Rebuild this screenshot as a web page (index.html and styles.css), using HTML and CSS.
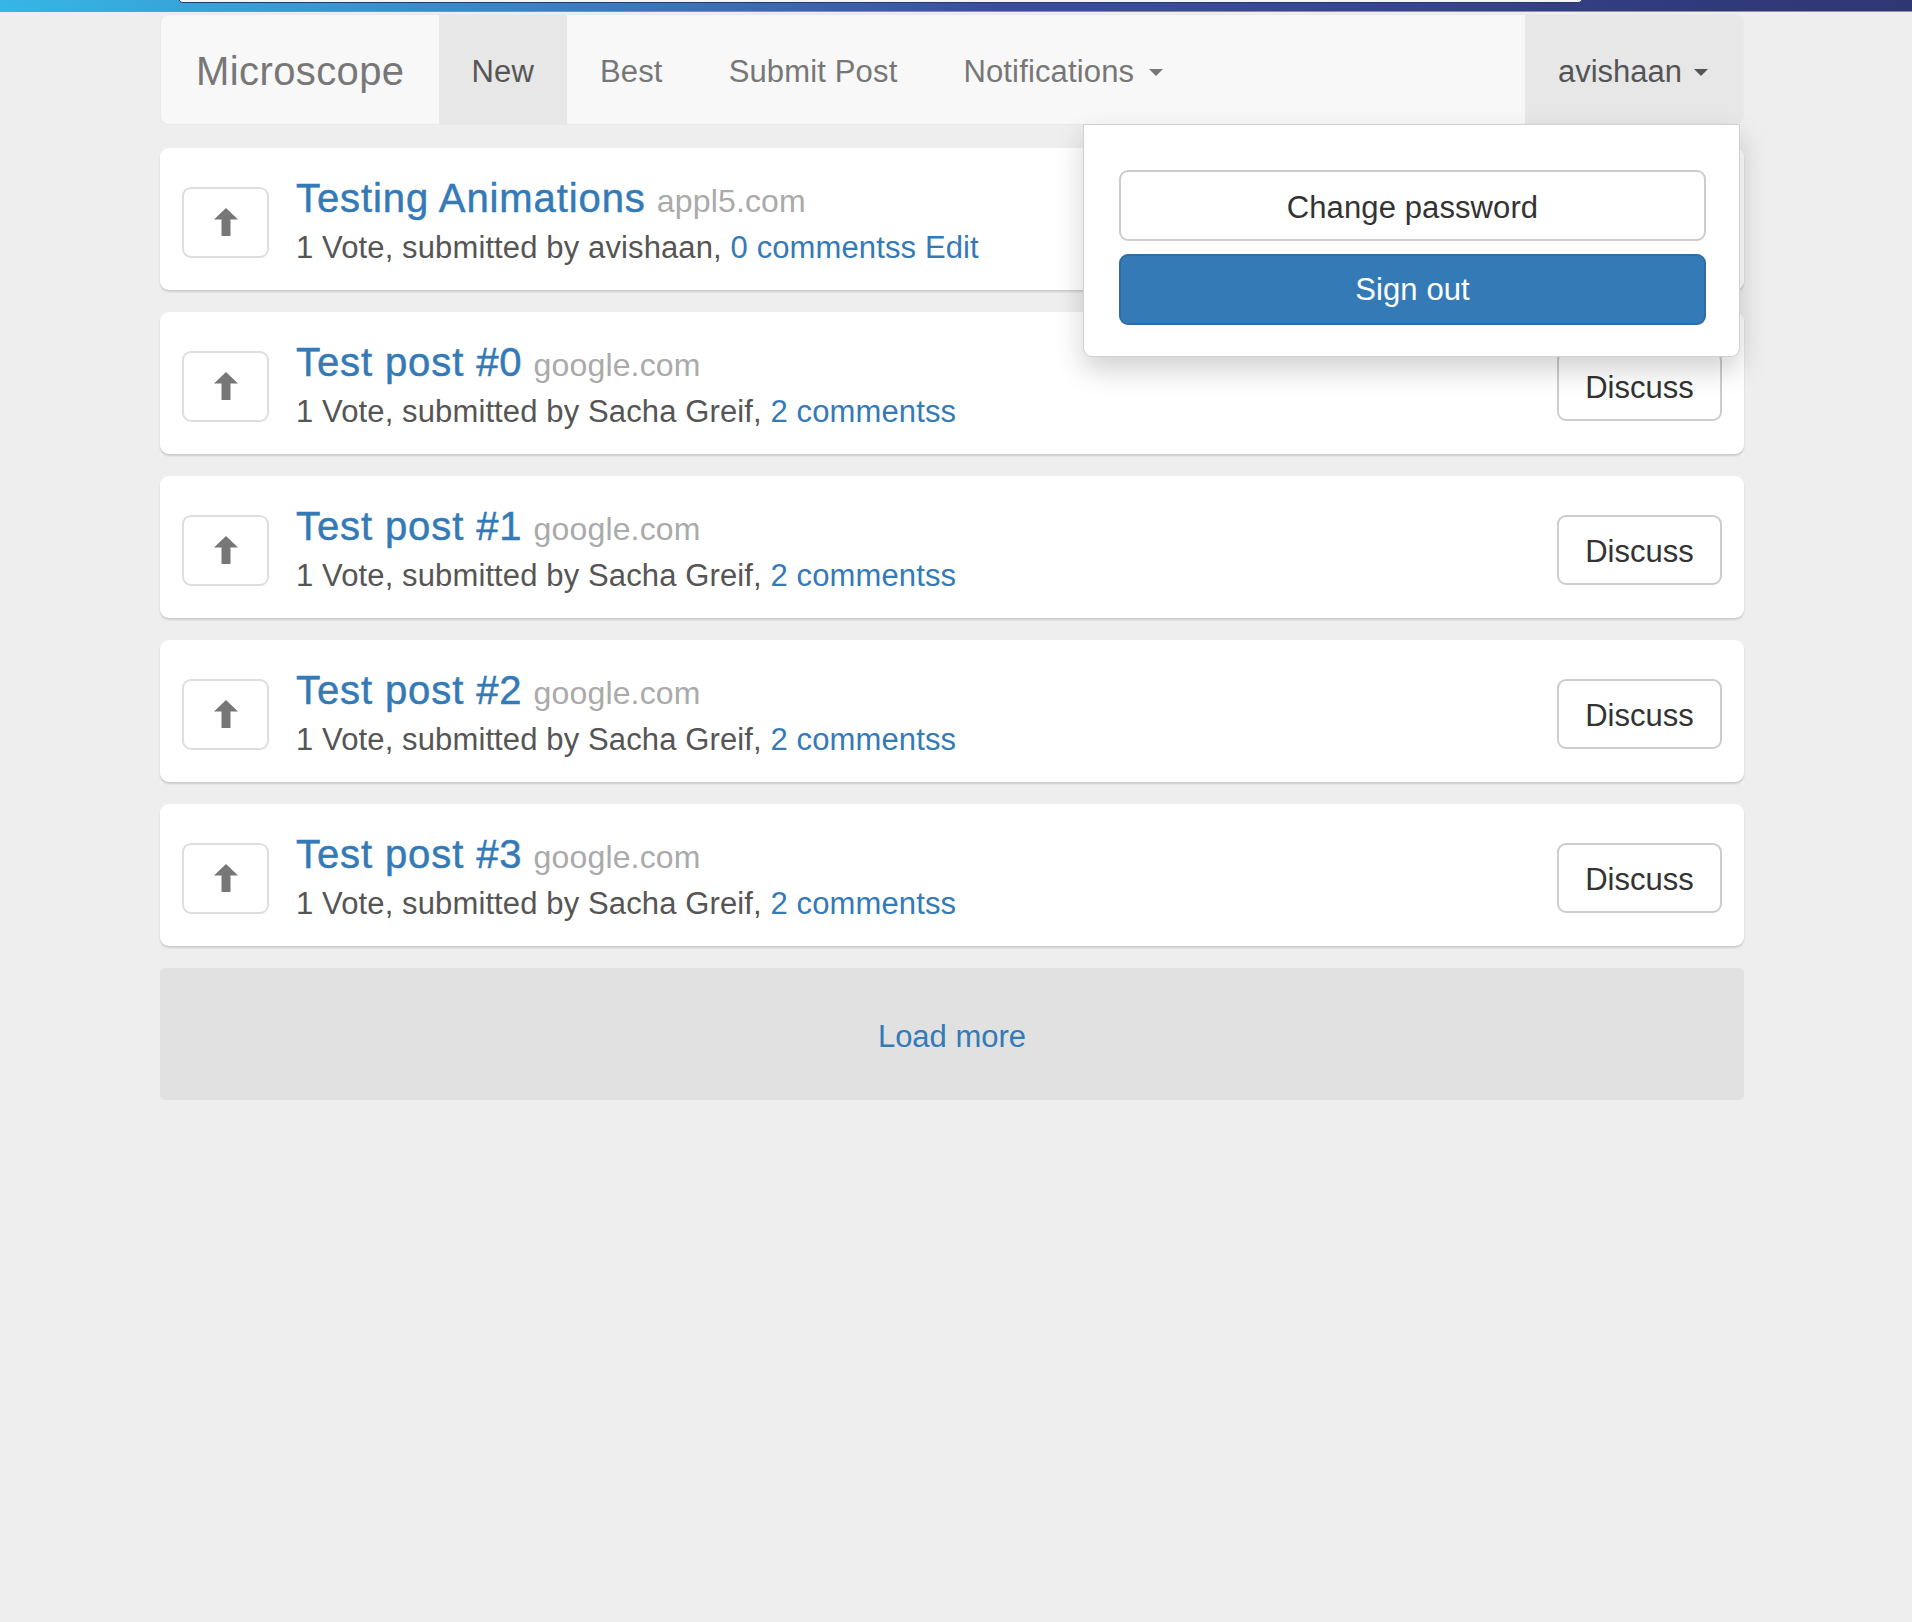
FILE: index.html
```html
<!DOCTYPE html>
<html lang="en">
<head>
<meta charset="utf-8">
<title>Microscope</title>
<link rel="stylesheet" href="styles.css">
</head>
<body>
<div class="topbar"><div class="topbar-tab"></div></div>
<div class="container">
  <nav class="navbar">
    <a class="brand" href="#">Microscope</a>
    <ul class="nav">
      <li class="nav-item active"><a href="#">New</a></li>
      <li class="nav-item"><a href="#">Best</a></li>
      <li class="nav-item"><a href="#">Submit Post</a></li>
      <li class="nav-item"><a href="#">Notifications<span class="caret"></span></a></li>
    </ul>
    <div class="nav-right">
      <div class="user-toggle"><a href="#">avishaan<span class="caret"></span></a></div>
      <div class="dropdown-menu">
        <button class="btn btn-default btn-block">Change password</button>
        <button class="btn btn-primary btn-block">Sign out</button>
      </div>
    </div>
  </nav>

  <div class="posts">
    <div class="post">
      <a class="upvote" href="#"><svg class="arrow" viewBox="0 0 24 28" width="24" height="28"><polygon points="12,0 24,11.5 16.5,11.5 16.5,28 7.5,28 7.5,11.5 0,11.5" fill="#777"/></svg></a>
      <div class="post-content">
        <div class="post-title"><a href="#">Testing Animations</a> <span class="domain">appl5.com</span></div>
        <div class="post-meta">1 Vote, submitted by avishaan, <a href="#">0 commentss</a> <a href="#">Edit</a></div>
      </div>
      <a class="discuss" href="#">Discuss</a>
    </div>
    <div class="post">
      <a class="upvote" href="#"><svg class="arrow" viewBox="0 0 24 28" width="24" height="28"><polygon points="12,0 24,11.5 16.5,11.5 16.5,28 7.5,28 7.5,11.5 0,11.5" fill="#777"/></svg></a>
      <div class="post-content">
        <div class="post-title"><a href="#">Test post #0</a> <span class="domain">google.com</span></div>
        <div class="post-meta">1 Vote, submitted by Sacha Greif, <a href="#">2 commentss</a></div>
      </div>
      <a class="discuss" href="#">Discuss</a>
    </div>
    <div class="post">
      <a class="upvote" href="#"><svg class="arrow" viewBox="0 0 24 28" width="24" height="28"><polygon points="12,0 24,11.5 16.5,11.5 16.5,28 7.5,28 7.5,11.5 0,11.5" fill="#777"/></svg></a>
      <div class="post-content">
        <div class="post-title"><a href="#">Test post #1</a> <span class="domain">google.com</span></div>
        <div class="post-meta">1 Vote, submitted by Sacha Greif, <a href="#">2 commentss</a></div>
      </div>
      <a class="discuss" href="#">Discuss</a>
    </div>
    <div class="post">
      <a class="upvote" href="#"><svg class="arrow" viewBox="0 0 24 28" width="24" height="28"><polygon points="12,0 24,11.5 16.5,11.5 16.5,28 7.5,28 7.5,11.5 0,11.5" fill="#777"/></svg></a>
      <div class="post-content">
        <div class="post-title"><a href="#">Test post #2</a> <span class="domain">google.com</span></div>
        <div class="post-meta">1 Vote, submitted by Sacha Greif, <a href="#">2 commentss</a></div>
      </div>
      <a class="discuss" href="#">Discuss</a>
    </div>
    <div class="post">
      <a class="upvote" href="#"><svg class="arrow" viewBox="0 0 24 28" width="24" height="28"><polygon points="12,0 24,11.5 16.5,11.5 16.5,28 7.5,28 7.5,11.5 0,11.5" fill="#777"/></svg></a>
      <div class="post-content">
        <div class="post-title"><a href="#">Test post #3</a> <span class="domain">google.com</span></div>
        <div class="post-meta">1 Vote, submitted by Sacha Greif, <a href="#">2 commentss</a></div>
      </div>
      <a class="discuss" href="#">Discuss</a>
    </div>
  </div>

  <a class="load-more" href="#">Load more</a>
</div>
</body>
</html>
```

FILE: styles.css
```css
* { box-sizing: border-box; }

html, body {
  margin: 0;
  padding: 0;
}

body {
  background: #eeeeee;
  font-family: "Liberation Sans", Arial, Helvetica, sans-serif;
  font-size: 31px;
  color: #555;
  min-height: 1622px;
}

a { text-decoration: none; color: #337ab7; }

.topbar {
  position: relative;
  height: 12px;
  background: linear-gradient(to right, #36b6e6 0%, #3a90cc 20%, #3a6fb4 38%, #3a4d9d 52%, #384794 70%, #313a7c 88%, #2f3674 100%);
  border-bottom: 1px solid #8f9098;
  overflow: hidden;
}

.topbar-tab {
  position: absolute;
  left: 178px;
  width: 1405px;
  top: -8px;
  height: 11px;
  background: #f3f5f9;
  border: 1px solid #253a6c;
  border-radius: 0 0 5px 5px;
}

.container {
  width: 1584px;
  margin-left: 160px;
  padding-top: 2px;
}

/* Navbar */
.navbar {
  position: relative;
  display: flex;
  align-items: stretch;
  height: 111px;
  background: #f8f8f8;
  border: 1px solid #e9e9e9;
  border-radius: 9px;
  margin-bottom: 23px;
}

.brand {
  display: flex;
  align-items: center;
  padding: 4px 34px 0 35px;
  font-size: 40px;
  letter-spacing: 0.4px;
  color: #777;
}

.nav {
  display: flex;
  list-style: none;
  margin: 0;
  padding: 0;
}

.nav-item a,
.user-toggle a {
  display: flex;
  align-items: center;
  height: 100%;
  padding: 4px 33px 0 33px;
  color: #777;
  font-size: 31px;
  letter-spacing: 0.15px;
}

.nav-item.active a {
  background: #e7e7e7;
  color: #555;
}

.caret {
  display: inline-block;
  width: 0;
  height: 0;
  margin-left: 15px;
  margin-top: 2px;
  border-top: 7px solid #777;
  border-left: 7px solid transparent;
  border-right: 7px solid transparent;
}

.nav-right {
  margin-left: auto;
  position: relative;
  display: flex;
}

.user-toggle {
  background: #e7e7e7;
  border-radius: 0 8px 8px 0;
}

.user-toggle a {
  color: #555;
  padding: 4px 35px 0 33px;
  letter-spacing: 0;
}

.user-toggle .caret {
  border-top-color: #555;
  margin-left: 12px;
}

.dropdown-menu {
  position: absolute;
  top: 109px;
  right: 3px;
  width: 657px;
  z-index: 10;
  display: flex;
  flex-direction: column;
  gap: 13px;
  padding: 45px 33px 31px 35px;
  background: #fff;
  border: 1px solid rgba(0, 0, 0, 0.18);
  border-radius: 0 0 9px 9px;
  box-shadow: 0 13px 28px rgba(0, 0, 0, 0.18);
}

.btn {
  display: block;
  width: 100%;
  height: 71px;
  padding: 4px 0 0 0;
  font-family: inherit;
  font-size: 31px;
  letter-spacing: 0.1px;
  border-radius: 9px;
  cursor: pointer;
}

.btn-default {
  background: #fff;
  border: 2px solid #cccccc;
  color: #333;
}

.btn-primary {
  padding-top: 0;
  background: #337ab7;
  border: 2px solid #2e6da4;
  color: #fff;
}

/* Posts */
.post {
  display: flex;
  align-items: center;
  height: 142px;
  padding: 6px 22px 0 22px;
  margin-bottom: 22px;
  background: #fff;
  border-radius: 9px;
  box-shadow: 0 2px 2px rgba(0, 0, 0, 0.14);
}

.upvote {
  flex: none;
  display: flex;
  align-items: center;
  justify-content: center;
  width: 87px;
  height: 71px;
  border: 2px solid #dedede;
  border-radius: 9px;
  background: #fff;
}

.arrow { display: block; margin-left: 1px; }

.post-content {
  flex: 1;
  margin-left: 27px;
}

.post-title {
  font-size: 40px;
  line-height: 44px;
  padding-top: 1px;
  white-space: nowrap;
}

.post-title a {
  color: #337ab7;
  letter-spacing: 0.9px;
  -webkit-text-stroke: 0.5px #337ab7;
}

.domain {
  font-size: 32px;
  color: #aaaaaa;
  letter-spacing: 0.15px;
}

.post-meta {
  margin-top: 3px;
  font-size: 31px;
  line-height: 44px;
  letter-spacing: 0.12px;
  color: #555;
}

.discuss {
  flex: none;
  display: flex;
  align-items: center;
  justify-content: center;
  width: 165px;
  height: 70px;
  padding-top: 4px;
  border: 2px solid #cccccc;
  border-radius: 9px;
  color: #333;
  font-size: 31px;
  background: #fff;
}

.load-more {
  display: block;
  height: 132px;
  line-height: 132px;
  padding-top: 3px;
  text-align: center;
  background: #e1e1e1;
  border-radius: 5px;
  font-size: 31px;
  color: #337ab7;
}
```
